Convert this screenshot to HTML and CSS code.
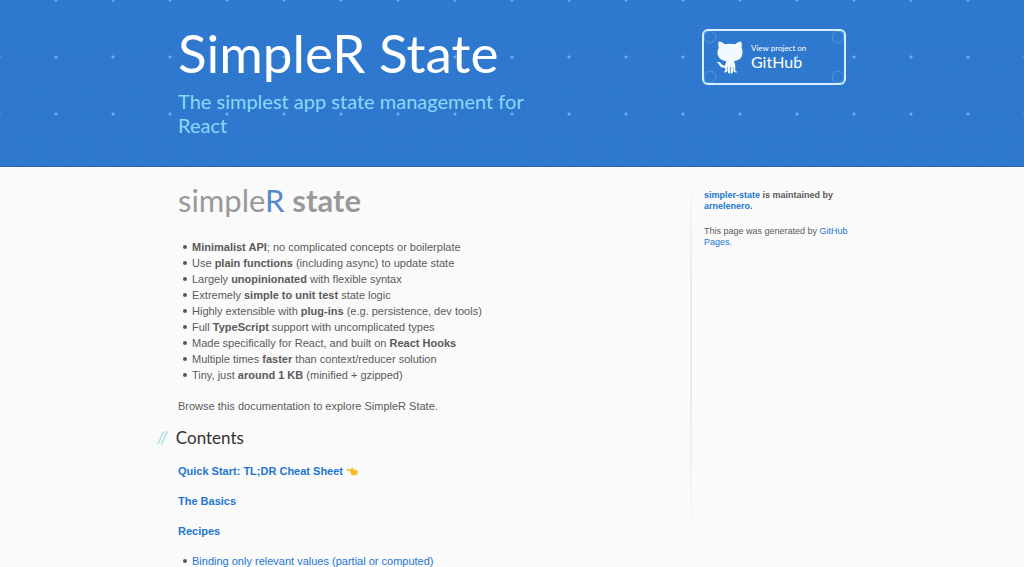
FILE: index.html
```html
<!DOCTYPE html>
<html lang="en">
<head>
<meta charset="utf-8">
<meta name="viewport" content="width=device-width, initial-scale=1">
<title>SimpleR State</title>
<link rel="stylesheet" href="styles.css">
</head>
<body>
<header class="site-header">
  <div class="inner header-row">
    <div class="brand">
      <h1 class="title">SimpleR State</h1>
      <p class="tagline">The simplest app state management for React</p>
    </div>
    <a class="github-button" href="#github">
      <svg class="octocat" viewBox="0 0 28 36" aria-hidden="true">
        <path d="M3 1.500C5 1.500 7.500 3 9 4.200C12 3.500 17 3.500 20 4.200C22 2.500 24 1.500 26 1.500C27 4 27 6 26.500 8C28 11 28 15 26 18C24 20.500 21 21.500 18.500 21.800C19.500 23 20 25 20 27V31C20 32 21 32.500 22 33C21 34 18.500 33.500 18 32V27.500H17.600V33C17.600 34 16.500 34.800 15.500 34.500V27.500H14.800V34.500C13 34.800 12.300 34 12.300 33V27.500H11.800V32C11 33.500 9 34 8 33C9 32.500 9.500 32 9.500 31V28.500C6 29 4.500 28 3.500 26C2.700 24.300 2 23.600 .5 23C2 21.800 4.200 22.500 5.500 24.500C6.500 26 8 26.500 9.600 26C9.700 24 10.100 22.800 11 21.800C7 21.500 4 20 2.500 17C1 14 1.200 10.500 3 8C2 6 2 3.500 3 1.500Z"/>
      </svg>
      <span class="button-text"><small>View project on</small><span>GitHub</span></span>
    </a>
  </div>
</header>
<div class="inner page">
  <main class="content">
    <div class="wordmark">simple<span class="blue">R</span> <strong>state</strong></div>
    <ul>
      <li><strong>Minimalist API</strong>; no complicated concepts or boilerplate</li>
      <li>Use <strong>plain functions</strong> (including async) to update state</li>
      <li>Largely <strong>unopinionated</strong> with flexible syntax</li>
      <li>Extremely <strong>simple to unit test</strong> state logic</li>
      <li>Highly extensible with <strong>plug-ins</strong> (e.g. persistence, dev tools)</li>
      <li>Full <strong>TypeScript</strong> support with uncomplicated types</li>
      <li>Made specifically for React, and built on <strong>React Hooks</strong></li>
      <li>Multiple times <strong>faster</strong> than context/reducer solution</li>
      <li>Tiny, just <strong>around 1 KB</strong> (minified + gzipped)</li>
    </ul>
    <p>Browse this documentation to explore SimpleR State.</p>
    <h2 class="section-title">Contents</h2>
    <p><a class="strong" href="#quick">Quick Start: TL;DR Cheat Sheet</a>
      <svg class="hand" viewBox="0 0 12 9" aria-hidden="true"><path fill="#fbc12d" d="M.5 2.200C.8 1.400 2 1.500 5 2.200L6 .7C7 .2 7.500 1 7 2.300C9 2.300 11 3 11.700 4V7C10.500 8.300 8.500 8.600 6.500 8.200C5 7.800 4.500 7 4.800 6C4 5.500 4 4.700 4.600 4.100L1.200 3.400C.6 3.200.3 2.800.5 2.200Z"/><path fill="none" stroke="#d98a1c" stroke-width=".4" d="M4.600 4.200H7.500M4.800 6H7.500"/></svg>
    </p>
    <p><a class="strong" href="#basics">The Basics</a></p>
    <p><a class="strong" href="#recipes">Recipes</a></p>
    <ul>
      <li><a href="#binding">Binding only relevant values (partial or computed)</a></li>
    </ul>
  </main>
  <aside class="sidebar">
    <p><strong><a href="#repo">simpler-state</a> is maintained by <a href="#owner">arnelenero</a>.</strong></p>
    <p>This page was generated by <a href="#pages">GitHub Pages</a>.</p>
  </aside>
</div>
</body>
</html>
```
FILE: styles.css
```css
* { box-sizing: border-box; }
body {
  height: 100vh;
  margin: 0;
  overflow: hidden;
  background: #fafafa;
  color: #5a5a5a;
  font: 11px/16px "Liberation Sans", Arial, sans-serif;
}
a { color: #2276d2; text-decoration: none; }
.inner { max-width: 668px; margin: 0 auto; }

.site-header {
  min-height: 167px;
  padding-top: 29px;
  border-bottom: 1px solid #2a64a8;
  background:
    radial-gradient(ellipse 1px 3px at 28px 28px, #86c3f2, transparent) 28px 29px / 57px 57px,
    radial-gradient(ellipse 3px 1px at 28px 28px, #86c3f2, transparent) 28px 29px / 57px 57px,
    linear-gradient(90deg, #2a72c644 1px, transparent 1px) 0 0 / 3px 3px,
    linear-gradient(#2a72c644 1px, transparent 1px) 0 0 / 3px 3px,
    linear-gradient(#307bd2, #2f79ce);
}
.header-row { display: flex; justify-content: space-between; align-items: flex-start; }
.brand { max-width: 360px; }
.title {
  margin: 0;
  color: #fff;
  font: 400 53px/48px Lato, sans-serif;
}
.tagline {
  margin: 12px 0 0;
  color: #8bd8fb;
  font: 20px/24px Lato, sans-serif;
}
.github-button {
  display: flex;
  align-items: center;
  gap: 8px;
  width: 144px;
  height: 56px;
  padding: 0 12px;
  border: 2px solid #d5effc;
  border-radius: 6px;
  color: #fff;
  background:
    radial-gradient(circle at 6px 6px, transparent 5px, #67aae666 5px 6px, transparent 7px),
    radial-gradient(circle at 134px 6px, transparent 5px, #67aae666 5px 6px, transparent 7px),
    radial-gradient(circle at 6px 46px, transparent 5px, #67aae666 5px 6px, transparent 7px),
    radial-gradient(circle at 134px 46px, transparent 5px, #67aae666 5px 6px, transparent 7px);
}
.octocat { width: 27px; height: 35px; fill: #f1faff; }
.button-text { display: flex; flex-direction: column; font: 16px/18px Lato, sans-serif; }
.button-text small { font-size: 8px; line-height: 10px; }

.page { display: flex; }
.content { flex: 1; padding-top: 15px; }
.wordmark { margin-bottom: 21px; color: #999; font: 31px/36px Lato, sans-serif; }
.blue { color: #5489d0; }
ul { margin: 0 0 15px; padding: 0; list-style: none; }
li { display: flow-root; padding-left: 14px; }
li::before {
  content: "";
  float: left;
  width: 4px;
  height: 4px;
  margin: 6px 0 0 -9px;
  border-radius: 50%;
  background: #5a5a5a;
}
p { margin: 0 0 14px; }
.strong { font-weight: 700; }
.section-title {
  margin: 0 0 15px -21px;
  color: #333;
  font: 400 17px/20px Lato, sans-serif;
}
.section-title::before { content: "//"; margin-right: 8px; color: #9fd7ea; font-style: italic; }
.hand { width: 12px; height: 9px; vertical-align: -1px; }
.sidebar {
  width: 162px;
  min-height: 378px;
  margin-right: -6px;
  padding: 23px 0 0 14px;
  background: linear-gradient(transparent, #eaeaea 30%, #eaeaea 60%, transparent) 0 0 / 2px 378px no-repeat;
  font-size: 9px;
  line-height: 11px;
}
```
